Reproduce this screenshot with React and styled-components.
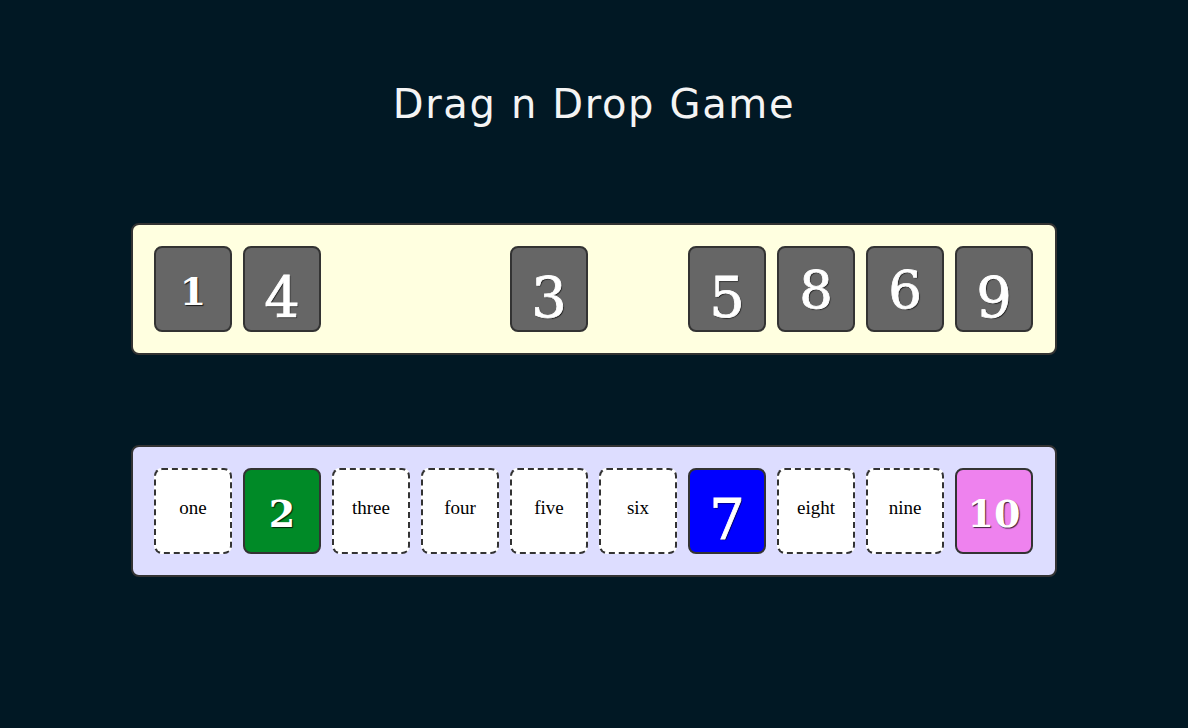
import React from "react";
import styled, { createGlobalStyle } from "styled-components";

const GlobalStyle = createGlobalStyle`
  html, body {
    margin: 0;
    padding: 0;
    background: #011824;
  }
  body {
    min-height: 728px;
    font-family: "Liberation Serif", serif;
  }
`;

// old-style figure look: which digits sit at x-height, rise, or drop
const FIGURE_KIND = {
  0: "small",
  1: "small",
  2: "small",
  6: "tall",
  8: "tall",
  3: "low",
  4: "low",
  5: "low",
  7: "low",
  9: "low",
};

const FIGURE_SIZE = { small: 38, tall: 53, low: 56 };
const FIGURE_SHIFT = { small: 3, tall: 0, low: 9 };
const FIGURE_WEIGHT = { small: 700, tall: 400, low: 400 };
const FIGURE_STROKE = { small: 0, tall: 0.8, low: 0.8 };

const topRow = [1, 4, null, null, 3, null, 5, 8, 6, 9];

const bottomRow = [
  { word: "one" },
  { num: 2, color: "#008a27" },
  { word: "three" },
  { word: "four" },
  { word: "five" },
  { word: "six" },
  { num: 7, color: "#0000ff" },
  { word: "eight" },
  { word: "nine" },
  { num: 10, color: "#ee82ee" },
];

function Number({ value }) {
  return (
    <Figures>
      {String(value)
        .split("")
        .map((ch, i) => (
          <Figure key={i} $kind={FIGURE_KIND[ch]}>
            {ch}
          </Figure>
        ))}
    </Figures>
  );
}

export default function App() {
  return (
    <Page>
      <GlobalStyle />
      <Title>Drag n Drop Game</Title>

      <Board $bg="#ffffe0">
        {topRow.map((n, i) =>
          n === null ? (
            <Slot key={i} />
          ) : (
            <Tile key={i} $bg="#666666">
              <Number value={n} />
            </Tile>
          )
        )}
      </Board>

      <Board $bg="#ddddff">
        {bottomRow.map((item, i) =>
          item.word ? (
            <Target key={i}>{item.word}</Target>
          ) : (
            <Tile key={i} $bg={item.color}>
              <Number value={item.num} />
            </Tile>
          )
        )}
      </Board>
    </Page>
  );
}

const Page = styled.div`
  display: flex;
  flex-direction: column;
  align-items: center;
`;

const Title = styled.h1`
  margin: 81px 0 96px;
  font-family: "DejaVu Sans", Verdana, sans-serif;
  font-weight: normal;
  font-size: 40px;
  line-height: 46px;
  letter-spacing: 1.65px;
  color: #f4f4f4;
`;

const Board = styled.div`
  box-sizing: border-box;
  width: 926px;
  display: flex;
  gap: 11px;
  padding: 21px 22px 21px 21px;
  margin-bottom: 90px;
  background: ${(p) => p.$bg};
  border: 2px solid #333;
  border-radius: 8px;
`;

const Slot = styled.div`
  box-sizing: border-box;
  width: 78px;
  height: 86px;
  flex: none;
`;

const Tile = styled(Slot)`
  display: flex;
  align-items: center;
  justify-content: center;
  background: ${(p) => p.$bg};
  border: 2px solid #333;
  border-radius: 8px;
`;

const Target = styled(Slot)`
  display: flex;
  align-items: center;
  justify-content: center;
  padding-bottom: 6px;
  background: #fff;
  border: 2px dashed #333;
  border-radius: 8px;
  font-size: 19px;
  color: #000;
`;

const Figures = styled.div`
  display: flex;
  align-items: center;
  color: #fff;
  font-family: "DejaVu Serif", "Liberation Serif", serif;
  text-shadow: 1px 1px 1px rgba(0, 0, 0, 0.75);
`;

const Figure = styled.span`
  display: block;
  line-height: 1;
  font-size: ${(p) => FIGURE_SIZE[p.$kind]}px;
  font-weight: ${(p) => FIGURE_WEIGHT[p.$kind]};
  -webkit-text-stroke: ${(p) => FIGURE_STROKE[p.$kind]}px #fff;
  transform: translateY(${(p) => FIGURE_SHIFT[p.$kind]}px);
`;
